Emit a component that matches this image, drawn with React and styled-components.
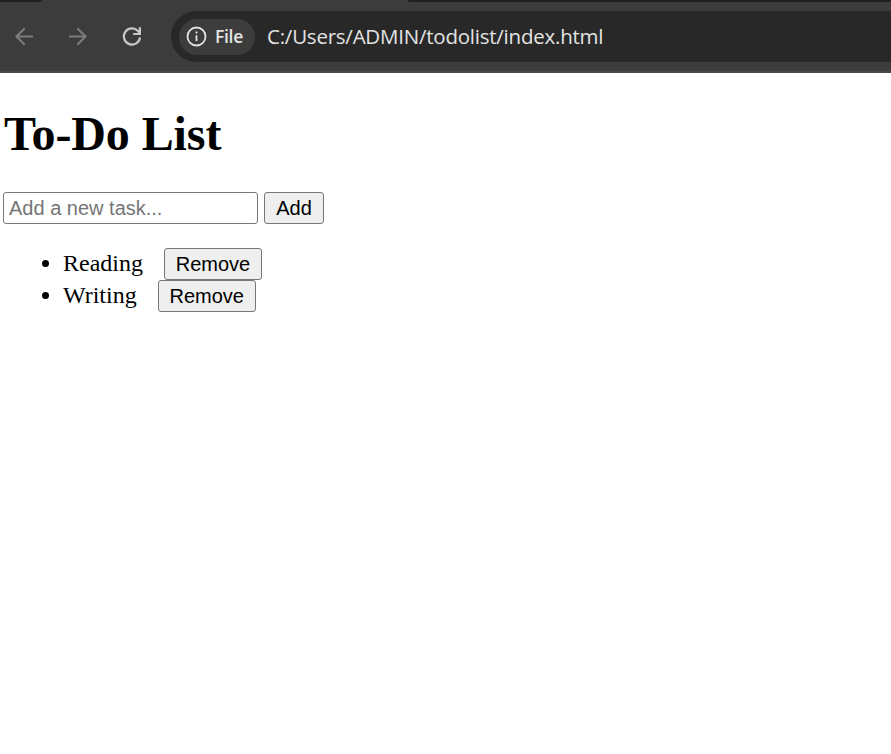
import React, { useState } from "react";
import styled, { createGlobalStyle } from "styled-components";

const GlobalStyle = createGlobalStyle`
  * { box-sizing: border-box; }
  html, body { margin: 0; background: #fff; }
  body { overflow: hidden; }
`;

const Window = styled.div`
  width: 100%;
  height: 754px;
  overflow: hidden;
  background: #fff;
`;

const Chrome = styled.header`
  height: 73px;
  background: #3c3c3c;
  border-bottom: 2px solid #4a4848;
`;

const TabStrip = styled.div`
  display: flex;
  justify-content: space-between;
  height: 2px;
`;

const TabEdge = styled.div`
  width: ${(p) => p.$width}px;
  background: #202020;
  border-radius: ${(p) => (p.$end ? "0 0 0 2px" : "0 0 2px 0")};
`;

const Toolbar = styled.nav`
  display: flex;
  align-items: flex-start;
  height: 69px;
  padding-top: 9px;
`;

const NavButtons = styled.div`
  display: flex;
  align-items: center;
  gap: 30px;
  width: 171px;
  height: 50px;
  padding-left: 12px;
`;

const NavButton = styled.button`
  display: flex;
  width: 24px;
  height: 24px;
  padding: 0;
  border: 0;
  background: none;
  color: ${(p) => (p.$active ? "#c7c7c7" : "#7b7b7b")};
`;

const AddressBar = styled.div`
  display: flex;
  flex: 1;
  align-items: center;
  height: 51px;
  padding-left: 8px;
  background: #282828;
  border-radius: 26px 0 0 26px;
`;

const SchemeChip = styled.div`
  display: flex;
  align-items: center;
  gap: 8px;
  width: 76px;
  height: 36px;
  padding-left: 7px;
  border-radius: 18px;
  background: #3c3c3c;
  color: #e3e3e3;
  font: 600 17.5px/34px "Open Sans", sans-serif;
  letter-spacing: -0.3px;
`;

const SchemeLabel = styled.span`
  height: 36px;
`;

const Url = styled.span`
  height: 36px;
  margin-left: 12px;
  color: #e3e3e3;
  font: 400 20.5px/34px "Open Sans", sans-serif;
  letter-spacing: -0.23px;
  white-space: nowrap;
`;

const Page = styled.main`
  padding: 33px 3px 0;
  color: #000;
  font: 24px/27px "Liberation Serif", serif;
`;

const Title = styled.h1`
  margin: 0 0 31px 1px;
  font-size: 48px;
  line-height: 55px;
  font-weight: 700;
  letter-spacing: -0.1px;
`;

const TaskForm = styled.form`
  display: flex;
  gap: 6px;
`;

const TaskInput = styled.input`
  width: 255px;
  height: 32px;
  padding: 0 5px;
  border: 1px solid #767676;
  border-radius: 3px;
  background: #fff;
  font: 20px "Liberation Sans", sans-serif;
  &::placeholder { color: #757575; }
`;

const Button = styled.button`
  width: ${(p) => p.$width}px;
  height: 32px;
  padding: 0;
  border: 1px solid #767676;
  border-radius: 3px;
  background: #efefef;
  color: #000;
  font: 20px "Liberation Sans", sans-serif;
`;

const TaskList = styled.ul`
  margin: 24px 0 0;
  padding: 0 0 0 60px;
`;

const Task = styled.li`
  height: 32px;
  line-height: 30px;
`;

const TaskRow = styled.div`
  display: flex;
  gap: 21px;
`;

function BackIcon() {
  return (
    <svg width="24" height="24" viewBox="0 0 24 24" fill="none" stroke="currentColor" strokeWidth="2.2">
      <path d="M21 12.5H4.5M12.7 4.3L4.5 12.5L12.7 20.7" />
    </svg>
  );
}

function ForwardIcon() {
  return (
    <svg width="24" height="24" viewBox="0 0 24 24" fill="none" stroke="currentColor" strokeWidth="2.2">
      <path d="M3 12.5H19.5M11.3 4.3L19.5 12.5L11.3 20.7" />
    </svg>
  );
}

function ReloadIcon() {
  return (
    <svg width="24" height="24" viewBox="0 0 24 24" fill="none" stroke="currentColor" strokeWidth="2.2">
      <path d="M20 13.4A8.1 8.1 0 1 1 17.7 6.8L20 9.2M19.9 3.2V10H13.1" />
    </svg>
  );
}

function InfoIcon() {
  return (
    <svg width="21" height="21" viewBox="0 0 21 21" fill="none" stroke="currentColor" strokeWidth="1.8">
      <circle cx="10.5" cy="10.5" r="9" />
      <path d="M10.5 9.3V15M10.5 5.6V7.5" />
    </svg>
  );
}

export default function App() {
  const [tasks, setTasks] = useState(["Reading", "Writing"]);
  const [draft, setDraft] = useState("");

  const addTask = (event) => {
    event.preventDefault();
    if (!draft.trim()) return;
    setTasks([...tasks, draft.trim()]);
    setDraft("");
  };

  return (
    <Window>
      <GlobalStyle />
      <Chrome>
        <TabStrip>
          <TabEdge $width={42} />
          <TabEdge $width={483} $end />
        </TabStrip>
        <Toolbar>
          <NavButtons>
            <NavButton aria-label="Back"><BackIcon /></NavButton>
            <NavButton aria-label="Forward"><ForwardIcon /></NavButton>
            <NavButton aria-label="Reload" $active><ReloadIcon /></NavButton>
          </NavButtons>
          <AddressBar>
            <SchemeChip><InfoIcon /><SchemeLabel>File</SchemeLabel></SchemeChip>
            <Url>C:/Users/ADMIN/todolist/index.html</Url>
          </AddressBar>
        </Toolbar>
      </Chrome>
      <Page>
        <Title>To-Do List</Title>
        <TaskForm onSubmit={addTask}>
          <TaskInput
            placeholder="Add a new task..."
            value={draft}
            onChange={(event) => setDraft(event.target.value)}
          />
          <Button $width={60}>Add</Button>
        </TaskForm>
        <TaskList>
          {tasks.map((task, index) => (
            <Task key={index}>
              <TaskRow>
                <span>{task}</span>
                <Button $width={98} onClick={() => setTasks(tasks.filter((_, i) => i !== index))}>
                  Remove
                </Button>
              </TaskRow>
            </Task>
          ))}
        </TaskList>
      </Page>
    </Window>
  );
}
